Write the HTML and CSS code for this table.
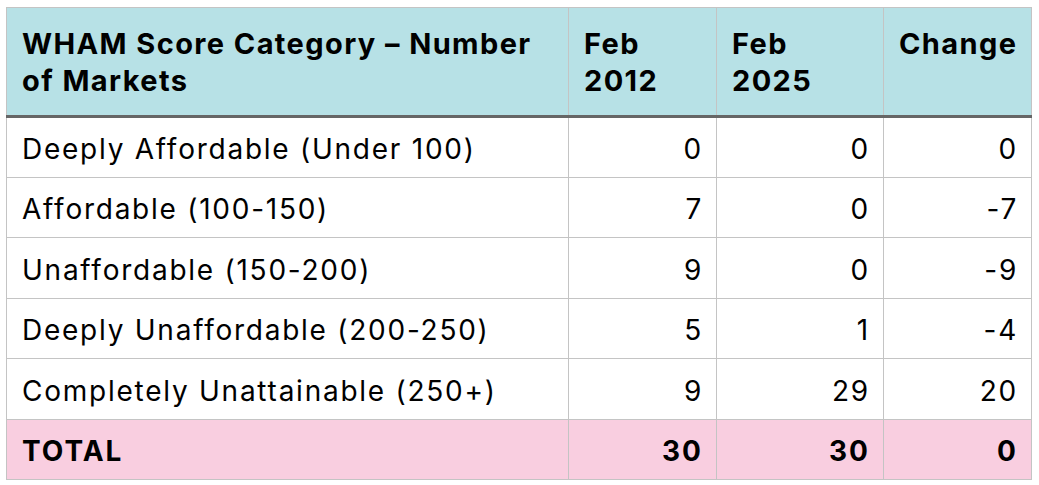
FILE: index.html
```html
<!DOCTYPE html>
<html>
<head>
<meta charset="utf-8">
<link rel="stylesheet" href="styles.css">
</head>
<body>
<table class="wham">
  <colgroup>
    <col class="c1"><col class="c2"><col class="c3"><col class="c4">
  </colgroup>
  <thead>
    <tr>
      <th>WHAM Score Category – Number<br>of Markets</th>
      <th>Feb<br>2012</th>
      <th>Feb<br>2025</th>
      <th>Change</th>
    </tr>
  </thead>
  <tbody>
    <tr><td>Deeply Affordable (Under 100)</td><td class="num">0</td><td class="num">0</td><td class="num">0</td></tr>
    <tr><td>Affordable (100-150)</td><td class="num">7</td><td class="num">0</td><td class="num">-7</td></tr>
    <tr><td>Unaffordable (150-200)</td><td class="num">9</td><td class="num">0</td><td class="num">-9</td></tr>
    <tr><td>Deeply Unaffordable (200-250)</td><td class="num">5</td><td class="num">1</td><td class="num">-4</td></tr>
    <tr><td>Completely Unattainable (250+)</td><td class="num">9</td><td class="num">29</td><td class="num">20</td></tr>
    <tr class="total"><td>TOTAL</td><td class="num">30</td><td class="num">30</td><td class="num">0</td></tr>
  </tbody>
</table>
</body>
</html>
```
FILE: styles.css
```css
html, body {
  margin: 0;
  padding: 0;
  background: #ffffff;
}
body {
  padding: 7px 0 0 6px;
  font-family: Inter, "Liberation Sans", sans-serif;
  color: #000;
}
.wham {
  border-collapse: collapse;
  width: 1025px;
  table-layout: fixed;
}
.c1 { width: 562px; }
.c2 { width: 148px; }
.c3 { width: 167px; }
.c4 { width: 148px; }
.wham th, .wham td {
  border: 1px solid #c4c4c4;
  padding: 0 13px 0 15px;
}
.wham th {
  background: #b7e1e6;
  font-weight: 700;
  font-size: 29px;
  letter-spacing: 1.4px;
  line-height: 37px;
  text-align: left;
  vertical-align: top;
  padding-top: 17px;
  padding-bottom: 16px;
  border-bottom: 3px solid #666666;
  white-space: nowrap;
}
.wham td {
  font-size: 28px;
  line-height: 34px;
  height: 60.5px;
  box-sizing: border-box;
  padding-top: 4px;
  vertical-align: middle;
  letter-spacing: 1.75px;
}
.wham td.num {
  text-align: right;
}
.total td {
  background: #f9cee0;
  font-weight: 700;
  letter-spacing: 2px;
}
```
